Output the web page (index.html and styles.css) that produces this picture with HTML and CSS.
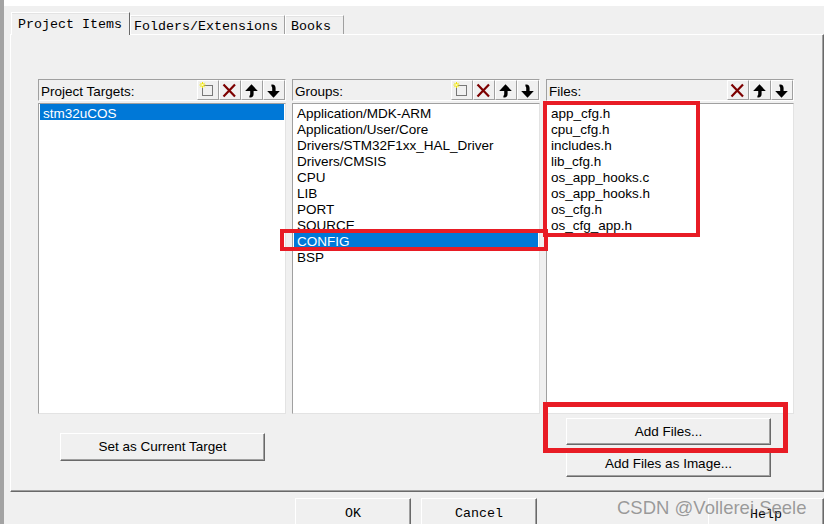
FILE: index.html
```html
<!DOCTYPE html>
<html>
<head>
<meta charset="utf-8">
<link rel="stylesheet" href="styles.css">
</head>
<body>
<div class="page">
  <div class="topband"></div>
  <div class="tabs">
    <div class="tab active">Project Items</div>
    <div class="tab t2">Folders/Extensions</div>
    <div class="tab t3">Books</div>
  </div>
  <div class="panel">
    <div class="columns">
      <div class="col">
        <div class="hdr">
          <span class="hdr-label">Project Targets:</span>
          <div class="tools">
            <div class="tb"><svg width="20" height="18" viewBox="0 0 20 18"><rect x="4.5" y="4.5" width="10" height="10" fill="none" stroke="#000" stroke-dasharray="1 1"/><path d="M4.5 1V7M1.5 4H7.5M2.3 1.8L6.7 6.2M6.7 1.8L2.3 6.2" stroke="#f2e600" stroke-width="1"/><rect x="3.5" y="3" width="2" height="2" fill="#fffbb0"/></svg></div>
            <div class="tb"><svg width="20" height="18" viewBox="0 0 20 18"><path d="M3.5 3.5L15 15.5M15 3.5L3.5 15.5" stroke="#7d0000" stroke-width="2.2"/></svg></div>
            <div class="tb"><svg width="20" height="18" viewBox="0 0 20 18"><path d="M9.5 3.2L15.8 10L11.6 10L11.6 13Q11.6 16.2 8.4 16.6L7.4 16.6L7.4 14.8Q8.2 14.4 8.2 13L8.2 10L3.2 10Z" fill="#000"/></svg></div>
            <div class="tb"><svg width="20" height="18" viewBox="0 0 20 18"><path d="M9.5 16.8L15.8 10L11.6 10L11.6 7Q11.6 3.8 8.4 3.4L7.4 3.4L7.4 5.2Q8.2 5.6 8.2 7L8.2 10L3.2 10Z" fill="#000"/></svg></div>
          </div>
        </div>
        <div class="list">
          <div class="item sel">stm32uCOS</div>
        </div>
        <button class="btn target">Set as Current Target</button>
      </div>
      <div class="col">
        <div class="hdr">
          <span class="hdr-label">Groups:</span>
          <div class="tools">
            <div class="tb"><svg width="20" height="18" viewBox="0 0 20 18"><rect x="4.5" y="4.5" width="10" height="10" fill="none" stroke="#000" stroke-dasharray="1 1"/><path d="M4.5 1V7M1.5 4H7.5M2.3 1.8L6.7 6.2M6.7 1.8L2.3 6.2" stroke="#f2e600" stroke-width="1"/><rect x="3.5" y="3" width="2" height="2" fill="#fffbb0"/></svg></div>
            <div class="tb"><svg width="20" height="18" viewBox="0 0 20 18"><path d="M3.5 3.5L15 15.5M15 3.5L3.5 15.5" stroke="#7d0000" stroke-width="2.2"/></svg></div>
            <div class="tb"><svg width="20" height="18" viewBox="0 0 20 18"><path d="M9.5 3.2L15.8 10L11.6 10L11.6 13Q11.6 16.2 8.4 16.6L7.4 16.6L7.4 14.8Q8.2 14.4 8.2 13L8.2 10L3.2 10Z" fill="#000"/></svg></div>
            <div class="tb"><svg width="20" height="18" viewBox="0 0 20 18"><path d="M9.5 16.8L15.8 10L11.6 10L11.6 7Q11.6 3.8 8.4 3.4L7.4 3.4L7.4 5.2Q8.2 5.6 8.2 7L8.2 10L3.2 10Z" fill="#000"/></svg></div>
          </div>
        </div>
        <div class="list">
          <div class="item">Application/MDK-ARM</div>
          <div class="item">Application/User/Core</div>
          <div class="item">Drivers/STM32F1xx_HAL_Driver</div>
          <div class="item">Drivers/CMSIS</div>
          <div class="item">CPU</div>
          <div class="item">LIB</div>
          <div class="item">PORT</div>
          <div class="item">SOURCE</div>
          <div class="item sel">CONFIG</div>
          <div class="item">BSP</div>
        </div>
      </div>
      <div class="col">
        <div class="hdr">
          <span class="hdr-label">Files:</span>
          <div class="tools">
            <div class="tb"><svg width="20" height="18" viewBox="0 0 20 18"><path d="M3.5 3.5L15 15.5M15 3.5L3.5 15.5" stroke="#7d0000" stroke-width="2.2"/></svg></div>
            <div class="tb"><svg width="20" height="18" viewBox="0 0 20 18"><path d="M9.5 3.2L15.8 10L11.6 10L11.6 13Q11.6 16.2 8.4 16.6L7.4 16.6L7.4 14.8Q8.2 14.4 8.2 13L8.2 10L3.2 10Z" fill="#000"/></svg></div>
            <div class="tb"><svg width="20" height="18" viewBox="0 0 20 18"><path d="M9.5 16.8L15.8 10L11.6 10L11.6 7Q11.6 3.8 8.4 3.4L7.4 3.4L7.4 5.2Q8.2 5.6 8.2 7L8.2 10L3.2 10Z" fill="#000"/></svg></div>
          </div>
        </div>
        <div class="list">
          <div class="item">app_cfg.h</div>
          <div class="item">cpu_cfg.h</div>
          <div class="item">includes.h</div>
          <div class="item">lib_cfg.h</div>
          <div class="item">os_app_hooks.c</div>
          <div class="item">os_app_hooks.h</div>
          <div class="item">os_cfg.h</div>
          <div class="item">os_cfg_app.h</div>
        </div>
        <button class="btn add">Add Files...</button>
        <button class="btn add-img">Add Files as Image...</button>
      </div>
    </div>
  </div>
  <div class="footer">
    <button class="fbtn">OK</button>
    <button class="fbtn cancel">Cancel</button>
    <button class="fbtn help">Help</button>
  </div>
  <div class="mark mark-config"></div>
  <div class="mark mark-files"></div>
  <div class="mark mark-add"></div>
  <div class="watermark">CSDN @Vollerei Seele</div>
</div>
</body>
</html>
```

FILE: styles.css
```css
* { box-sizing: border-box; }
html, body { margin: 0; padding: 0; background: #f0f0f0; }
.page {
  position: relative;
  width: 824px;
  height: 524px;
  overflow: hidden;
  background: #f0f0f0;
  border-left: 4px solid #a3a3a3;
  font-family: "Liberation Sans", Arial, sans-serif;
  font-size: 13.5px;
  color: #000;
}
.topband { height: 6px; background: #fff; }

.tabs {
  display: flex;
  align-items: flex-end;
  height: 28px;
  margin-left: 7px;
  font-family: "Liberation Mono", "DejaVu Sans Mono", monospace;
  font-size: 13.33px;
}
.tab {
  height: 19px;
  border-top: 1px solid #fff;
  border-left: 1px solid #fff;
  border-right: 1px solid #a0a0a0;
  box-shadow: inset 0 1px #e3e3e3;
  padding: 3px 0 0 4px;
  line-height: 16px;
  white-space: nowrap;
  background: #f0f0f0;
}
.tab.active {
  position: relative;
  z-index: 1;
  width: 119px;
  height: 23px;
  margin-bottom: -1px;
  padding: 4px 0 0 6px;
  border-right: 1px solid #696969;
}
.t2 { width: 155px; padding-left: 3px; }
.t3 { width: 59px; padding-left: 5px; }

.panel {
  margin-left: 6px;
  width: 814px;
  height: 458px;
  border-top: 1px solid #fff;
  border-left: 1px solid #fff;
  border-right: 1px solid #696969;
  border-bottom: 1px solid #696969;
  box-shadow: inset -1px -1px #a0a0a0;
  padding: 44px 0 0 27px;
}
.columns { display: flex; gap: 6px; }
.col { width: 248px; display: flex; flex-direction: column; align-items: flex-start; }

.hdr {
  width: 248px;
  height: 22px;
  display: flex;
  align-items: center;
  border: 1px solid;
  border-color: #a0a0a0 #fff #fff #a0a0a0;
  padding-left: 2px;
}
.hdr-label { line-height: 16px; padding-top: 4px; }
.tools { margin-left: auto; display: flex; height: 20px; }
.tb {
  width: 22px;
  height: 20px;
  border: 1px solid;
  border-color: #fff #a0a0a0 #a0a0a0 #fff;
  display: flex;
}
.tb svg { display: block; }

.list {
  width: 248px;
  height: 311px;
  margin-top: 2px;
  border: 1px solid;
  border-color: #a0a0a0 #e3e3e3 #e3e3e3 #a0a0a0;
  background: #fff;
  padding: 0 1px;
}
.item {
  height: 16px;
  line-height: 15px;
  padding: 2px 0 0 3px;
  white-space: nowrap;
}
.item.sel { background: #0078d7; color: #fff; }

.btn {
  font-family: "Liberation Sans", Arial, sans-serif;
  font-size: 13.5px;
  color: #000;
  background: #f0f0f0;
  border: 1px solid;
  border-color: #fff #696969 #696969 #fff;
  box-shadow: inset -1px -1px #a0a0a0;
  width: 205px;
  padding: 0 0 1px;
  margin: 0;
}
.btn.target { height: 28px; margin: 19px 0 0 22px; }
.btn.add { height: 27px; margin: 4px 0 0 20px; }
.btn.add-img { height: 26px; margin: 6px 0 0 20px; }

.footer { display: flex; margin: 6px 0 0 291px; }
.fbtn {
  font-family: "Liberation Mono", "DejaVu Sans Mono", monospace;
  font-size: 13.33px;
  color: #000;
  background: #f0f0f0;
  width: 116px;
  height: 30px;
  padding: 0;
  margin: 0;
  border: 1px solid;
  border-color: #fff #696969 #696969 #fff;
  box-shadow: inset -1px -1px #a0a0a0;
}
.fbtn.cancel { margin-left: 10px; }
.fbtn.help { margin-left: 171px; width: 116px; padding-top: 3px; }

.mark { position: absolute; border: 4px solid #e81c25; }
.mark-config { left: 276px; top: 229px; width: 268px; height: 22px; }
.mark-files { left: 539px; top: 101px; width: 157px; height: 136px; }
.mark-add { left: 539px; top: 402px; width: 245px; height: 51px; border-width: 5px; }

.watermark {
  position: absolute;
  left: 613px;
  top: 498px;
  font-family: "Liberation Sans", Arial, sans-serif;
  font-size: 18.5px;
  line-height: 20px;
  color: rgba(120, 120, 120, 0.72);
  white-space: nowrap;
}
```
